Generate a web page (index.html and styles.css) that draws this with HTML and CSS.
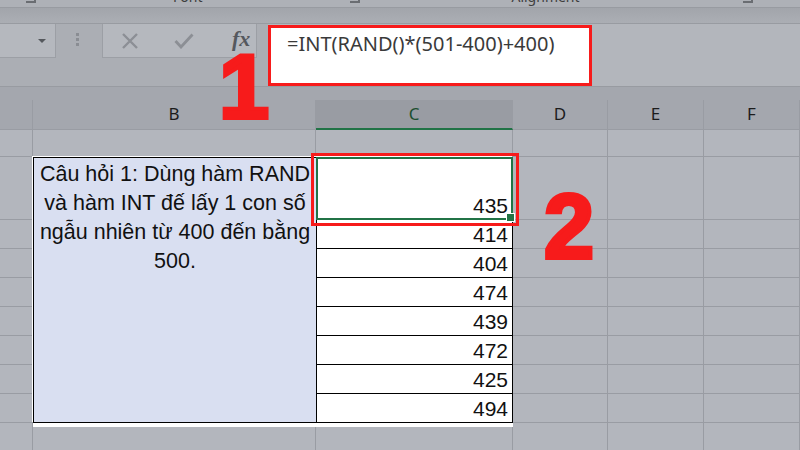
FILE: index.html
```html
<!DOCTYPE html>
<html lang="vi">
<head>
    <meta charset="UTF-8">
    <title>Hàm RAND và INT</title>
    <link rel="stylesheet" href="styles.css">
</head>
<body>
    <div class="ribbon">
        <span class="launcher l-first"></span>
        <span class="ribbon-label l-font">Font</span>
        <span class="launcher l-mid"></span>
        <span class="ribbon-label l-align">Alignment</span>
        <span class="launcher l-last"></span>
    </div>
    <div class="strip"></div>

    <div class="formula-bar">
        <div class="name-box"><span class="drop"></span></div>
        <div class="grip"><i></i><i></i><i></i></div>
        <div class="fx-box">
            <svg class="tool-icon" width="18" height="16" viewBox="0 0 18 16">
                <path d="M2 1 L16 15 M16 1 L2 15" stroke="#8c8f95" stroke-width="2.4" fill="none"/>
            </svg>
            <svg class="tool-icon" width="20" height="16" viewBox="0 0 20 16">
                <path d="M1.5 8 L7 14 L18.5 1.5" stroke="#8c8f95" stroke-width="2.8" fill="none"/>
            </svg>
            <span class="fx">fx</span>
        </div>
        <div class="formula-area">
            <div class="formula-input">=INT(RAND()*(501-400)+400)</div>
        </div>
    </div>
    <div class="gap"></div>

    <div class="sheet">
        <div class="c h"></div>
        <div class="c h">B</div>
        <div class="c h h-sel">C</div>
        <div class="c h">D</div>
        <div class="c h">E</div>
        <div class="c h">F</div>

        <div class="c"></div><div class="c"></div><div class="c"></div>
        <div class="c"></div><div class="c"></div><div class="c"></div>

        <div class="c"></div><div class="c"></div><div class="c"></div><div class="c"></div>
        <div class="c"></div><div class="c"></div><div class="c"></div><div class="c"></div>
        <div class="c"></div><div class="c"></div><div class="c"></div><div class="c"></div>
        <div class="c"></div><div class="c"></div><div class="c"></div><div class="c"></div>
        <div class="c"></div><div class="c"></div><div class="c"></div><div class="c"></div>
        <div class="c"></div><div class="c"></div><div class="c"></div><div class="c"></div>
        <div class="c"></div><div class="c"></div><div class="c"></div><div class="c"></div>
        <div class="c"></div><div class="c"></div><div class="c"></div><div class="c"></div>

        <div class="c"></div><div class="c"></div><div class="c"></div>
        <div class="c"></div><div class="c"></div><div class="c"></div>

        <div class="data">
            <div class="question">Câu hỏi 1: Dùng hàm RAND<br>và hàm INT đế lấy 1 con số<br>ngẫu nhiên từ 400 đến bằng<br>500.</div>
            <div class="num sel">435</div>
            <div class="num">414</div>
            <div class="num">404</div>
            <div class="num">474</div>
            <div class="num">439</div>
            <div class="num">472</div>
            <div class="num">425</div>
            <div class="num">494</div>
        </div>
    </div>

    <!-- chú thích màu đỏ -->
    <div class="mark-box"></div>
    <div class="mark-num n1">1</div>
    <div class="mark-num n2">2</div>
</body>
</html>
```

FILE: styles.css
```css
* {
    box-sizing: border-box;
}

body {
    margin: 0;
    width: 800px;
    height: 450px;
    overflow: hidden;
    position: relative;
    background: #b3b6bd;
    font-family: "Noto Sans", sans-serif;
}

/* ribbon (bị cắt ở trên) */
.ribbon {
    height: 8px;
    background: #aeb1b7;
    border-bottom: 1px solid #989ba1;
    display: flex;
    overflow: hidden;
}

.ribbon-label {
    font-size: 14px;
    line-height: 14px;
    color: #3e3e3e;
    margin-top: -10px;
    white-space: nowrap;
}

.launcher {
    width: 10px;
    height: 3px;
    border-bottom: 2px solid #6a6d72;
    border-right: 2px solid #6a6d72;
}

.l-first { margin-left: 26px; }
.l-font { margin-left: 137px; }
.l-mid { margin-left: 148px; }
.l-align { margin-left: 151px; }
.l-last { margin-left: 163px; }

.strip {
    height: 15px;
    background: linear-gradient(#a2a5ab, #abaeb4);
}

/* formula bar */
.formula-bar {
    height: 64px;
    display: flex;
    align-items: flex-start;
    background: #abaeb4;
    border-top: 1px solid #989ba1;
    border-bottom: 1px solid #989ba1;
}

.name-box {
    width: 56px;
    height: 34px;
    background: #b5b8be;
    border-right: 1px solid #9c9fa5;
    border-bottom: 1px solid #9c9fa5;
    position: relative;
}

.drop {
    position: absolute;
    left: 38px;
    top: 15px;
    border-left: 4px solid transparent;
    border-right: 4px solid transparent;
    border-top: 4px solid #55585d;
}

.grip {
    display: flex;
    flex-direction: column;
    gap: 2px;
    margin: 9px 0 0 20px;
}

.grip i {
    width: 3px;
    height: 3px;
    background: #8a8d93;
}

.fx-box {
    width: 155px;
    height: 34px;
    margin-left: 23px;
    background: #b5b8be;
    border: 1px solid #9c9fa5;
    border-top: none;
    display: flex;
    align-items: center;
    padding-left: 18px;
}

.tool-icon {
    display: block;
}

.tool-icon + .tool-icon {
    margin-left: 35px;
}

.fx {
    margin-left: 38px;
    font-family: "Liberation Serif", serif;
    font-style: italic;
    font-weight: bold;
    font-size: 22px;
    color: #55585e;
    margin-top: -4px;
}

.formula-area {
    flex: 1;
    align-self: stretch;
    margin-left: 11px;
    padding-top: 1px;
    background: #b3b6bc;
}

.formula-input {
    width: 324px;
    height: 61px;
    background: #fff;
    border: 3px solid #f71b1b;
    padding: 2px 0 0 16px;
    font-size: 20px;
    color: #3a3a3a;
    white-space: nowrap;
}

.gap {
    height: 13px;
    background: #a4a7ae;
}

/* bảng tính */
.sheet {
    display: grid;
    grid-template-columns: 33px 283px 197px 95px 96px 96px;
    grid-template-rows: 30px 27px 63px repeat(7, 29px) 30px;
}

.c {
    border-right: 1px solid #999ca3;
    border-bottom: 1px solid #999ca3;
}

.h {
    background: #a4a7ae;
    text-align: center;
    font-size: 17px;
    line-height: 28px;
    color: #1c1c1c;
}

.h-sel {
    background: #999ca3;
    color: #1d4f30;
    border-bottom: 2px solid #217346;
}

.data {
    grid-column: 2 / 4;
    grid-row: 3 / 11;
    display: grid;
    grid-template-columns: 282px 195px;
    grid-template-rows: 61px repeat(7, 28px);
    gap: 1px;
    padding: 1px;
    background: #000;
    box-shadow: -1px -1px 0 #fff, 0 4px 0 #fff;
    font-family: "Liberation Sans", Arial, sans-serif;
    font-size: 21px;
    color: #111;
}

.question {
    grid-row: 1 / 9;
    background: #d9dff1;
    text-align: center;
    font-size: 21.5px;
    line-height: 29px;
    padding-top: 2px;
    white-space: nowrap;
}

.num {
    background: #fff;
    display: flex;
    align-items: flex-end;
    justify-content: flex-end;
    padding: 0 4px 2px;
    line-height: 22px;
}

.sel {
    position: relative;
    box-shadow: 0 0 0 1px #217346, inset 0 0 0 1px #217346;
}

.sel::after {
    content: "";
    position: absolute;
    right: -3px;
    bottom: -3px;
    width: 7px;
    height: 7px;
    background: #217346;
    border: 1px solid #fff;
}

/* chú thích */
.mark-box {
    position: absolute;
    left: 311px;
    top: 153px;
    width: 208px;
    height: 73px;
    border: 3px solid #f71b1b;
}

.mark-num {
    position: absolute;
    font-family: "Liberation Sans", Arial, sans-serif;
    font-weight: bold;
    font-size: 90px;
    line-height: 66px;
    color: #f71b1b;
    -webkit-text-stroke: 4px #f71b1b;
}

.n1 {
    left: 219px;
    top: 54px;
}

.n2 {
    left: 544px;
    top: 194px;
}
```
